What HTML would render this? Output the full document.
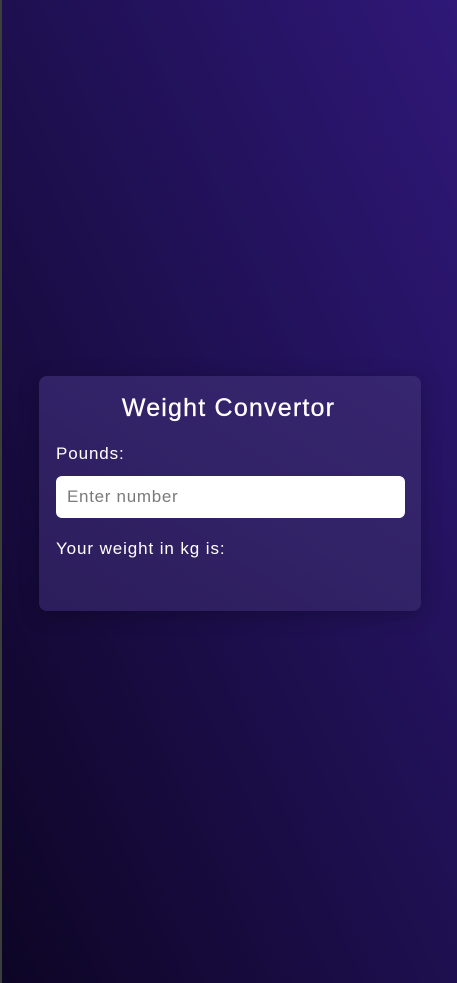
<!DOCTYPE html>
<html><head><style>
html,body{margin:0;padding:0;}
body{width:457px;height:983px;position:relative;overflow:hidden;
background:linear-gradient(to top right,#0d0525 0%,#1e0f50 50%,#2f1878 100%);
font-family:"Liberation Sans",sans-serif;color:#fff;}
.edge{position:absolute;left:0;top:0;width:2px;height:983px;background:#3a3f3a;}
.card{position:absolute;left:39px;top:376px;width:382px;height:235px;border-radius:8px;
background:linear-gradient(to top right,#2c1d5c,#372670);box-shadow:0 4px 20px rgba(0,0,0,.25);}
h1{position:absolute;left:0;right:0;top:393px;margin:0;text-align:center;font-size:25px;letter-spacing:1.2px;font-weight:normal;line-height:30px;-webkit-text-stroke:0.3px #fff;}
.l{position:absolute;left:56px;font-size:17px;letter-spacing:0.9px;line-height:20px;}
.in{position:absolute;left:56px;top:476px;width:349px;height:42px;background:#fff;border-radius:6px;}
.in span{position:absolute;left:11px;top:11px;color:#7a7a7a;font-size:17px;letter-spacing:0.7px;}
</style></head><body>
<div class="edge"></div>
<div class="card"></div>
<h1>Weight Convertor</h1>
<div class="l" style="top:444px">Pounds:</div>
<div class="in"><span>Enter number</span></div>
<div class="l" style="top:539px">Your weight in kg is:</div>
</body></html>
